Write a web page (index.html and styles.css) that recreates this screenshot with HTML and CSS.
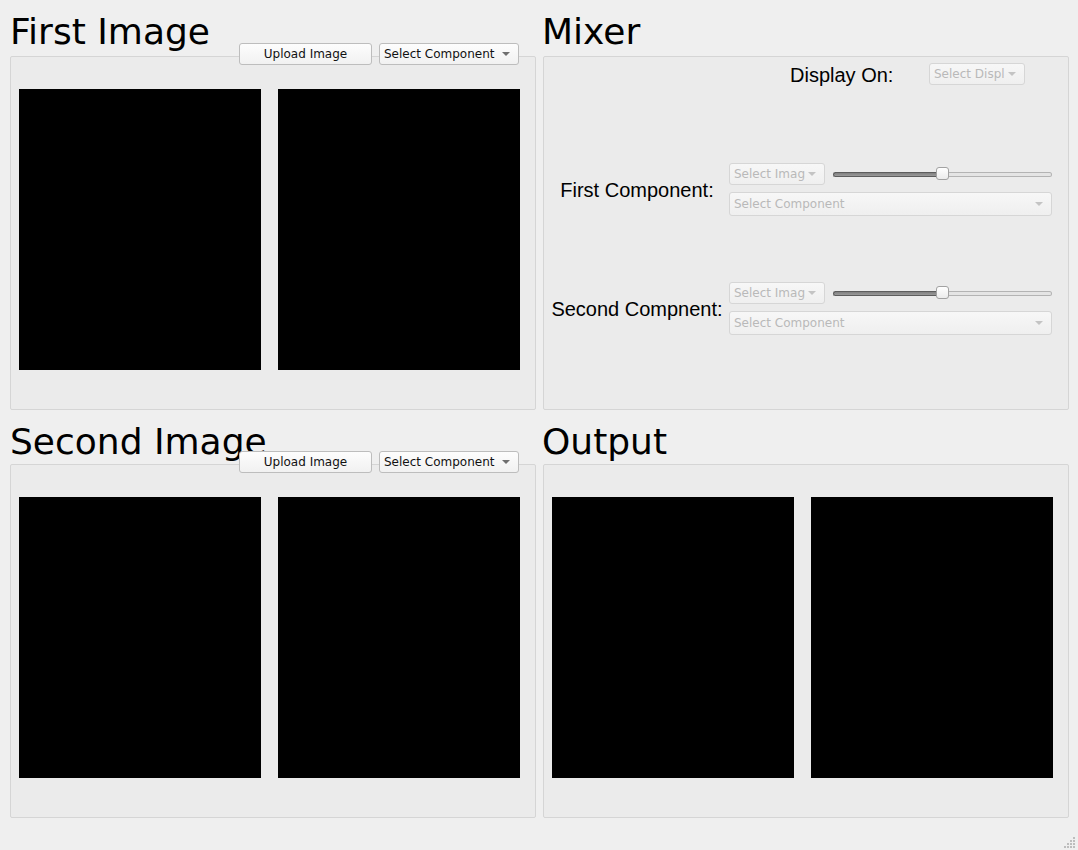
FILE: index.html
```html
<!DOCTYPE html>
<html>
<head>
<meta charset="utf-8">
<title>Image Mixer</title>
<link rel="stylesheet" href="styles.css">
</head>
<body>
<div class="window">
  <div class="head">
    <h1 class="title">First Image</h1>
    <div class="tools">
      <div class="btn">Upload Image</div>
      <div class="combo combo-main"><span>Select Component</span><i class="arrow"></i></div>
    </div>
  </div>
  <div class="head">
    <h1 class="title title-right">Mixer</h1>
  </div>

  <div class="panel images">
    <div class="img"></div>
    <div class="img"></div>
  </div>
  <div class="panel mixer">
    <div class="display-row">
      <span class="mlabel display-label">Display On:</span>
      <div class="combo disabled combo-small"><span>Select Displ</span><i class="arrow"></i></div>
    </div>
    <div class="group group-first">
      <div class="mlabel group-label">First Component:</div>
      <div class="controls">
        <div class="ctrl-row">
          <div class="combo disabled combo-small"><span>Select Imag</span><i class="arrow"></i></div>
          <div class="slider">
            <div class="groove"><span class="g-fill"></span><span class="g-rest"></span></div>
            <div class="handle"></div>
          </div>
        </div>
        <div class="combo disabled combo-wide"><span>Select Component</span><i class="arrow"></i></div>
      </div>
    </div>
    <div class="group group-second">
      <div class="mlabel group-label">Second Compnent:</div>
      <div class="controls">
        <div class="ctrl-row">
          <div class="combo disabled combo-small"><span>Select Imag</span><i class="arrow"></i></div>
          <div class="slider">
            <div class="groove"><span class="g-fill"></span><span class="g-rest"></span></div>
            <div class="handle"></div>
          </div>
        </div>
        <div class="combo disabled combo-wide"><span>Select Component</span><i class="arrow"></i></div>
      </div>
    </div>
  </div>

  <div class="head">
    <h1 class="title">Second Image</h1>
    <div class="tools">
      <div class="btn">Upload Image</div>
      <div class="combo combo-main"><span>Select Component</span><i class="arrow"></i></div>
    </div>
  </div>
  <div class="head">
    <h1 class="title title-right">Output</h1>
  </div>

  <div class="panel images">
    <div class="img"></div>
    <div class="img"></div>
  </div>
  <div class="panel images">
    <div class="img"></div>
    <div class="img"></div>
  </div>
</div>
<svg class="grip" width="12" height="12" viewBox="0 0 12 12">
  <g fill="#bdbdbd">
    <rect x="9" y="0" width="2" height="2"/>
    <rect x="6" y="3" width="2" height="2"/><rect x="9" y="3" width="2" height="2"/>
    <rect x="3" y="6" width="2" height="2"/><rect x="6" y="6" width="2" height="2"/><rect x="9" y="6" width="2" height="2"/>
    <rect x="0" y="9" width="2" height="2"/><rect x="3" y="9" width="2" height="2"/><rect x="6" y="9" width="2" height="2"/><rect x="9" y="9" width="2" height="2"/>
  </g>
</svg>
</body>
</html>
```

FILE: styles.css
```css
html, body {
  margin: 0;
  padding: 0;
}
body {
  width: 1078px;
  height: 850px;
  overflow: hidden;
  position: relative;
  background: #efefef;
  font-family: "DejaVu Sans", sans-serif;
  color: #000;
}
.window {
  display: grid;
  grid-template-columns: 526px 526px;
  grid-template-rows: 56px 354px 54px 354px;
  column-gap: 7px;
  padding-left: 10px;
}
.head {
  display: flex;
  align-items: flex-start;
  min-width: 0;
}
.title {
  flex: 1 1 0;
  min-width: 0;
  margin: 0;
  padding-top: 12px;
  font-family: "DejaVu Sans", sans-serif;
  font-weight: normal;
  font-size: 36px;
  line-height: 40px;
  white-space: nowrap;
}
.title-right {
  margin-left: -1px;
}
.tools {
  flex: none;
  margin-left: auto;
  align-self: flex-end;
  margin-bottom: -9px;
  margin-right: 17px;
  display: flex;
  gap: 7px;
  position: relative;
  z-index: 1;
}
.btn {
  box-sizing: border-box;
  width: 133px;
  height: 22px;
  border: 1px solid #bdbdbd;
  border-radius: 3px;
  background: linear-gradient(#fdfdfd, #f1f1f1);
  font-size: 12px;
  line-height: 20px;
  text-align: center;
  color: #111;
}
.combo {
  box-sizing: border-box;
  height: 22px;
  border: 1px solid #bdbdbd;
  border-radius: 3px;
  background: linear-gradient(#fdfdfd, #f1f1f1);
  display: flex;
  align-items: center;
  justify-content: space-between;
  padding: 0 8px 0 4px;
  font-size: 12px;
  color: #111;
  white-space: nowrap;
  overflow: hidden;
}
.combo-main {
  width: 140px;
}
.combo .arrow {
  width: 0;
  height: 0;
  border-left: 4px solid transparent;
  border-right: 4px solid transparent;
  border-top: 4px solid #6f6f6f;
  flex: none;
}
.combo.disabled {
  border-color: #d6d6d6;
  background: linear-gradient(#f7f7f7, #efefef);
  color: #b9b9b9;
}
.combo.disabled .arrow {
  border-top-color: #c4c4c4;
}
.combo-small {
  width: 96px;
}
.combo-wide {
  width: 323px;
  height: 24px;
}
.panel {
  box-sizing: border-box;
  border: 1px solid #d5d5d5;
  border-radius: 2px;
  background: #ebebeb;
}
.images {
  display: flex;
  align-items: flex-start;
  gap: 17px;
  padding: 32px 0 0 8px;
}
.img {
  width: 242px;
  height: 281px;
  background: #000;
  flex: none;
}
.mixer {
  display: flex;
  flex-direction: column;
  padding: 6px 16px 0 4px;
}
.mlabel {
  font-family: "Liberation Sans", Arial, sans-serif;
  font-size: 20px;
  line-height: 22px;
  white-space: nowrap;
}
.display-row {
  display: flex;
  align-items: center;
  height: 22px;
}
.display-label {
  margin-left: 242px;
  width: 103px;
  padding-top: 1px;
}
.display-row .combo {
  margin-left: 36px;
}
.group {
  display: grid;
  grid-template-columns: 178px 323px;
  column-gap: 3px;
  align-items: center;
}
.group-first {
  margin-top: 78px;
}
.group-second {
  margin-top: 66px;
}
.group-label {
  text-align: center;
}
.controls {
  display: flex;
  flex-direction: column;
  gap: 7px;
}
.ctrl-row {
  display: flex;
  gap: 8px;
  align-items: center;
}
.slider {
  position: relative;
  width: 219px;
  height: 22px;
  display: flex;
  align-items: center;
}
.groove {
  width: 100%;
  height: 5px;
  display: flex;
}
.g-fill {
  width: 50%;
  box-sizing: border-box;
  border: 1px solid #5d5d5d;
  border-right: none;
  border-radius: 3px 0 0 3px;
  background: linear-gradient(#808080, #9a9a9a);
}
.g-rest {
  flex: 1;
  box-sizing: border-box;
  border: 1px solid #b3b3b3;
  border-left: none;
  border-radius: 0 3px 3px 0;
  background: #e4e4e4;
}
.handle {
  position: absolute;
  left: 103px;
  top: 4px;
  box-sizing: border-box;
  width: 13px;
  height: 13px;
  border: 1px solid #a2a2a2;
  border-radius: 3px;
  background: linear-gradient(#ffffff, #ececec);
}
.grip {
  position: absolute;
  right: 2px;
  bottom: 1px;
}
```
